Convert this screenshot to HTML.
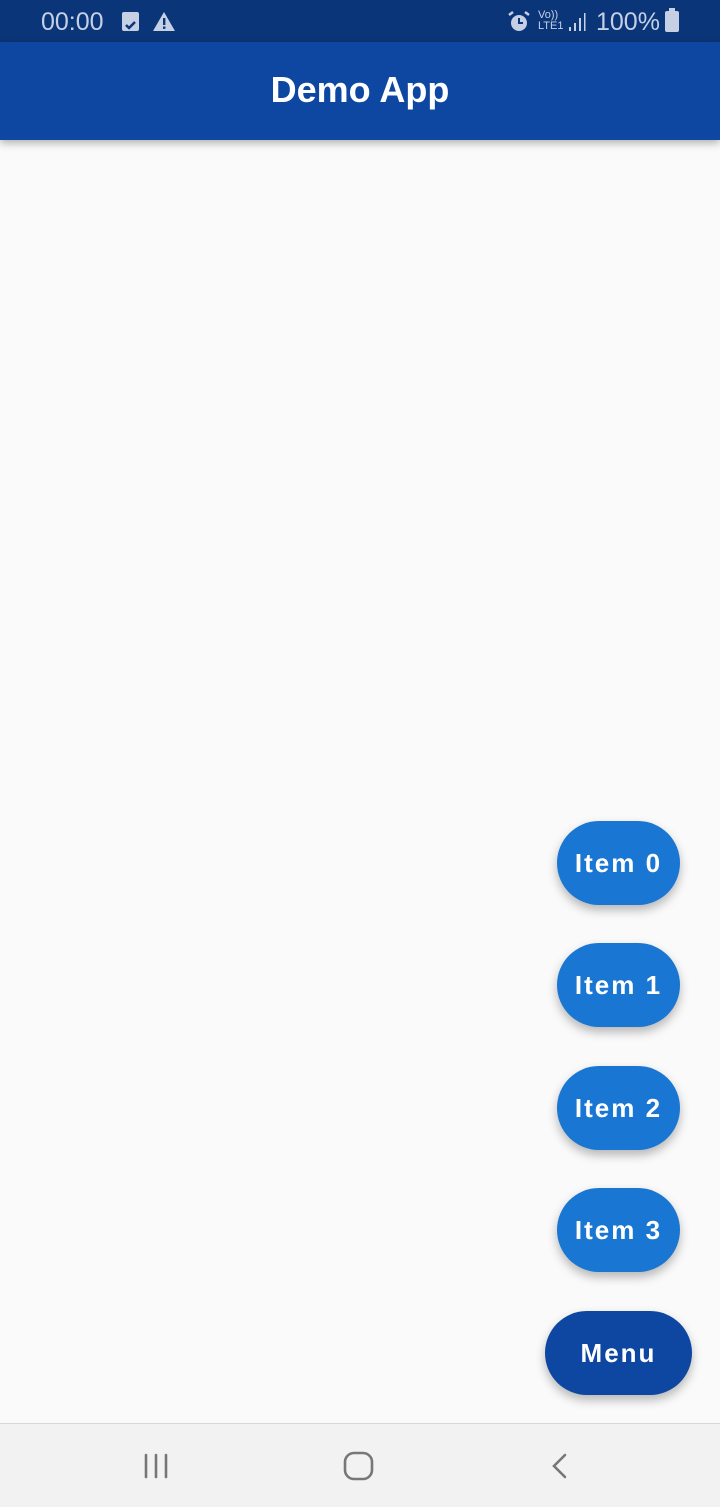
<!DOCTYPE html>
<html><head><meta charset="utf-8"><style>
*{margin:0;padding:0;box-sizing:border-box}
body{width:720px;height:1507px;background:#fafafa;font-family:"Liberation Sans",sans-serif;position:relative;overflow:hidden}
.sb{position:absolute;top:0;left:0;width:720px;height:42px;background:#0a3679;color:#c5d0e4;font-size:25px}
.ab{position:absolute;top:42px;left:0;width:720px;height:98px;background:#0d47a1;box-shadow:0 3px 8px rgba(0,0,0,.3);color:#fff;font-size:36px;text-align:center;line-height:96px;font-weight:bold}
.btn{position:absolute;border-radius:42px;height:84px;color:#fff;font-size:26px;font-weight:bold;letter-spacing:2px;text-align:center;line-height:84px;box-shadow:0 5px 10px rgba(0,0,0,.28)}
.it{left:557px;width:123px;background:#1976d2}
.mn{left:545px;width:147px;background:#0d47a1;top:1311px}
.nav{position:absolute;top:1423px;left:0;width:720px;height:84px;background:#f2f2f2;border-top:1px solid #d8d8d8}
</style></head><body>
<div class="sb">
<span style="position:absolute;left:41px;top:8px">00:00</span>
<div style="position:absolute;left:122px;top:12px;width:17px;height:19px;background:#c5d0e4;border-radius:2px"><svg width="17" height="19"><path d="M4 10l3 3 6-6" stroke="#0a3679" stroke-width="2.5" fill="none"/></svg></div>
<svg style="position:absolute;left:152px;top:11px" width="24" height="21"><path d="M12 1L23 20H1Z" fill="#c5d0e4"/><rect x="11" y="7" width="2.4" height="7" fill="#0a3679"/><rect x="11" y="15.5" width="2.4" height="2.4" fill="#0a3679"/></svg>
<svg style="position:absolute;left:507px;top:10px" width="24" height="24"><circle cx="12" cy="13" r="8" fill="#c5d0e4"/><path d="M12 8v5h4" stroke="#0a3679" stroke-width="2" fill="none"/><path d="M2 5l4-3M22 5l-4-3" stroke="#c5d0e4" stroke-width="2.5"/></svg>
<span style="position:absolute;left:538px;top:10px;font-size:11px;line-height:11px">Vo))<br>LTE1</span>
<svg style="position:absolute;left:568px;top:12px" width="20" height="20"><rect x="1" y="15" width="2" height="4" fill="#c5d0e4"/><rect x="6" y="11" width="2" height="8" fill="#c5d0e4"/><rect x="11" y="6" width="2" height="13" fill="#c5d0e4"/><rect x="16" y="1" width="1.5" height="18" fill="#c5d0e4"/></svg>
<span style="position:absolute;left:596px;top:8px">100%</span>
<div style="position:absolute;left:665px;top:11px;width:14px;height:21px;background:#c5d0e4;border-radius:2px"></div>
<div style="position:absolute;left:669px;top:8px;width:6px;height:4px;background:#c5d0e4"></div>
</div>
<div class="ab">Demo App</div>
<div class="btn it" style="top:821px">Item 0</div>
<div class="btn it" style="top:943px">Item 1</div>
<div class="btn it" style="top:1066px">Item 2</div>
<div class="btn it" style="top:1188px">Item 3</div>
<div class="btn mn">Menu</div>
<div class="nav">
<svg style="position:absolute;left:140px;top:26px" width="36" height="32"><path d="M6 5v22M16 5v22M26 5v22" stroke="#777" stroke-width="2.6" stroke-linecap="round"/></svg>
<svg style="position:absolute;left:340px;top:25px" width="40" height="34"><rect x="5" y="4" width="27" height="26" rx="9" stroke="#777" stroke-width="2.6" fill="none"/></svg>
<svg style="position:absolute;left:545px;top:26px" width="30" height="32"><path d="M20 5L9 16l11 11" stroke="#777" stroke-width="2.6" fill="none" stroke-linecap="round"/></svg>
</div>
</body></html>
